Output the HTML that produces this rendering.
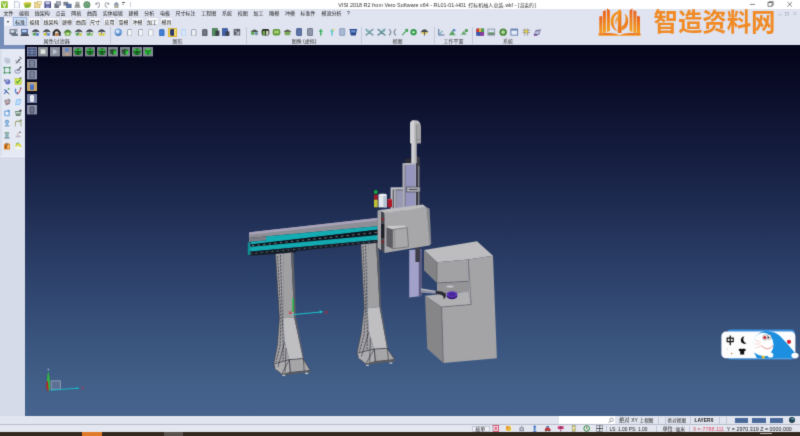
<!DOCTYPE html>
<html>
<head>
<meta charset="utf-8">
<title>VISI 2018 R2</title>
<style>
*{margin:0;padding:0;box-sizing:border-box}
html,body{width:800px;height:436px;overflow:hidden;background:#dde1ee;font-family:"Liberation Sans","Noto Sans CJK SC",sans-serif;}
#app{position:relative;width:800px;height:436px;overflow:hidden;background:#dde1ee}
#soften{position:absolute;left:0;top:0;width:800px;height:436px;filter:url(#softk)}
.abs{position:absolute}
.ic{position:absolute}
#title{left:0;top:0;width:800px;height:9px;background:#fff}
#title .t{position:absolute;left:338.3px;top:1.4px;font-size:5.42px;line-height:7px;color:#333;white-space:nowrap}
#menubar{left:0;top:9px;width:800px;height:8.4px;background:#e0e3f0}
.mi{position:absolute;top:1.4px;font-size:5px;line-height:7px;color:#1c1c1c;white-space:nowrap}
#ribbon{left:0;top:17.4px;width:800px;height:27.6px;background:#e0e3f0}
#ribleft{position:absolute;left:0;top:0;width:3.7px;height:28.1px;background:#748cb8}
.tab{position:absolute;top:0.1px;height:9px;font-size:5px;line-height:8.4px;color:#111;background:#f6f7fb;border:0.5px solid #d9dde9;text-align:center;white-space:nowrap;overflow:hidden}
.tab.act{background:#cddff5;border-color:#98b4dc}
.glabel{position:absolute;top:21px;font-size:5px;line-height:7px;color:#333;white-space:nowrap;transform:translateX(-50%)}
.sep{position:absolute;top:10px;width:0.7px;height:17px;background:#c4cadb}
#viewport{left:25px;top:45px;width:775px;height:370.6px;background:linear-gradient(to bottom,#04041a 0%,#0c102c 15%,#182246 35%,#273961 55%,#364f79 75%,#426089 92%,#45638c 100%);overflow:hidden}
#leftpanel{left:0;top:45.5px;width:25px;height:370px;background:#e3e7f1}
#status1{left:0;top:415.5px;width:800px;height:8.7px;background:#e1e5ef}
#status2{left:0;top:424.2px;width:800px;height:7.8px;background:#e4e7f0;border-top:0.6px solid #b8bdcb}
#taskbar{left:0;top:432px;width:800px;height:4px;background:#33291f}
.st{position:absolute;font-size:5.2px;line-height:7px;color:#222;white-space:nowrap}
</style>
</head>
<body>
<div id="app">
  <svg width="0" height="0" style="position:absolute"><defs><filter id="softk" x="0" y="0" width="100%" height="100%" color-interpolation-filters="sRGB"><feConvolveMatrix order="3" kernelMatrix="1 6 1 6 36 6 1 6 1" divisor="64" edgeMode="duplicate" preserveAlpha="true"/></filter></defs></svg>
<div id="soften">
  <div id="title" class="abs"><svg class="abs" style="left:1.1px;top:0.8px" width="6.8" height="7.6" viewBox="0 0 6.8 7.6"><rect x="0" y="0.2" width="6.8" height="7.2" rx="1" fill="#86bc2c"/><path d="M1.6,1.6 L3.4,6 L5.2,1.6" stroke="#f4fae0" stroke-width="1.1" fill="none"/></svg><svg class="abs" style="left:14px;top:0.8px" width="5.8" height="7.6" viewBox="0 0 5.8 7.6"><path d="M0.4,0.4 L3.8,0.4 L5.4,2 L5.4,7.2 L0.4,7.2 Z" fill="#f8fafd" stroke="#8f9cb8" stroke-width="0.6"/></svg><svg class="abs" style="left:22.5px;top:0.8px" width="9" height="7.6" viewBox="0 0 9 7.6"><path d="M0.4,2.2 L3,1 L8.4,1.6 L8,6 L2,7 Z" fill="#d8c83a"/><path d="M1.4,3.6 L7.6,2.6 L6.4,6.4 L2,7 Z" fill="#8cb838"/></svg><svg class="abs" style="left:33.8px;top:0.8px" width="7.8" height="7.6" viewBox="0 0 7.8 7.6"><rect x="0.6" y="1.6" width="5.4" height="5.4" fill="#ecd694" stroke="#b89a48" stroke-width="0.5"/><rect x="3.4" y="0.6" width="3.8" height="3" fill="#f4e8b8" stroke="#b89a48" stroke-width="0.4"/></svg><svg class="abs" style="left:43.9px;top:0.8px" width="7.4" height="7.6" viewBox="0 0 7.4 7.6"><rect x="0.4" y="0.6" width="6.6" height="6.6" rx="0.6" fill="#4a4f8c"/><rect x="1.6" y="1" width="4.2" height="2.4" fill="#c8cce8"/><rect x="2" y="4.6" width="3.4" height="2.4" fill="#8a8fc0"/></svg><svg class="abs" style="left:53.6px;top:0.8px" width="7.2" height="7.6" viewBox="0 0 7.2 7.6"><rect x="0.4" y="2.4" width="4.6" height="4.6" fill="#6c7280"/><rect x="2.4" y="0.6" width="4.4" height="4" fill="#a4aab8" stroke="#5a606e" stroke-width="0.4"/></svg><svg class="abs" style="left:63px;top:0.8px" width="8.6" height="7.6" viewBox="0 0 8.6 7.6"><rect x="0.4" y="0.8" width="4.8" height="3.8" fill="#7a8290"/><rect x="3.4" y="3" width="4.8" height="4" fill="#5f7aa8" stroke="#3c4c70" stroke-width="0.4"/></svg><svg class="abs" style="left:74.3px;top:0.8px" width="6.8" height="7.6" viewBox="0 0 6.8 7.6"><path d="M1.6,0.8 L5.2,0.8 L5.8,4 L6.6,7 L0.2,7 L1,4 Z" fill="#a8acaa"/><rect x="1.8" y="4" width="3.2" height="1" fill="#7c807e"/></svg><svg class="abs" style="left:83.3px;top:0.8px" width="7.8" height="7.6" viewBox="0 0 7.8 7.6"><circle cx="3.9" cy="3.8" r="3.5" fill="#5a9468"/><circle cx="3.9" cy="3.8" r="2" fill="#8ab894"/><circle cx="3.9" cy="3.8" r="0.9" fill="#3f7a4c"/></svg><svg class="abs" style="left:94.5px;top:0.8px" width="5.6" height="7.6" viewBox="0 0 5.6 7.6"><path d="M1,3 Q3.6,0.4 4.8,3.4 Q5,5.6 2.6,6.6" stroke="#9a9ea6" stroke-width="1.1" fill="none"/><path d="M0.2,1.4 L0.6,4 L3,3.4 Z" fill="#9a9ea6"/></svg><svg class="abs" style="left:104px;top:0.8px" width="5.8" height="7.6" viewBox="0 0 5.8 7.6"><path d="M4.8,3 Q2.2,0.4 1,3.4 Q0.8,5.6 3.2,6.6" stroke="#a4a8b0" stroke-width="1.1" fill="none"/><path d="M5.6,1.4 L5.2,4 L2.8,3.4 Z" fill="#a4a8b0"/></svg><svg class="abs" style="left:112.5px;top:0.8px" width="6.8" height="7.6" viewBox="0 0 6.8 7.6"><path d="M0.4,3.6 L3.4,0.8 L6.4,3.6 L5.4,3.6 L5.4,7 L1.4,7 L1.4,3.6 Z" fill="#8c98b0"/><rect x="2.6" y="4.4" width="1.6" height="2.6" fill="#d8c878"/></svg><div class="abs" style="left:122.4px;top:3.6px;width:0;height:0;border-left:1.1px solid transparent;border-right:1.1px solid transparent;border-top:1.5px solid #555"></div><div class="abs" style="left:122.2px;top:2.2px;width:2.4px;height:0.6px;background:#555"></div><div class="abs" style="left:129.8px;top:1.6px;width:0.6px;height:5.8px;background:#c8ccd6"></div><svg class="abs" role="img" aria-label="VISI 2018 R2 from Vero Software x64 - RL01-01-H01 打标机械人总装.wkf - [渲染的]" style="left:0;top:0;font-family:'Liberation Sans','Noto Sans CJK SC',sans-serif" width="800" height="9" viewBox="0 0 800 9"><text x="338.3" y="6.7" font-size="5.4" textLength="127.8" lengthAdjust="spacingAndGlyphs" fill="#333">VISI 2018 R2 from Vero Software x64 - RL01-01-H01</text><text x="468.2" y="6.6" font-size="5.04" textLength="35.3" lengthAdjust="spacingAndGlyphs" fill="#333">打标机械人总装</text><text x="504" y="6.7" font-size="5.4" textLength="8.9" lengthAdjust="spacingAndGlyphs" fill="#333">.wkf</text><text x="514.4" y="6.7" font-size="5.4" textLength="2" lengthAdjust="spacingAndGlyphs" fill="#333">-</text><text x="517.8" y="6.7" font-size="5.4" textLength="1.4" lengthAdjust="spacingAndGlyphs" fill="#333">[</text><text x="519.5" y="6.6" font-size="4.8" textLength="14.4" lengthAdjust="spacingAndGlyphs" fill="#333">渲染的</text><text x="534.5" y="6.7" font-size="5.4" textLength="1.4" lengthAdjust="spacingAndGlyphs" fill="#333">]</text></svg></div>
  <div id="menubar" class="abs"><div class="mi" style="left:3.4px">文件</div><div class="mi" style="left:19.1px">编辑</div><div class="mi" style="left:34.8px">线架构</div><div class="mi" style="left:55.6px">点云</div><div class="mi" style="left:71.3px">网格</div><div class="mi" style="left:87.0px">曲面</div><div class="mi" style="left:102.7px">实体编辑</div><div class="mi" style="left:128.4px">建模</div><div class="mi" style="left:144.2px">分析</div><div class="mi" style="left:159.9px">电极</div><div class="mi" style="left:175.6px">尺寸标注</div><div class="mi" style="left:201.3px">工程图</div><div class="mi" style="left:222.0px">系统</div><div class="mi" style="left:237.8px">校图</div><div class="mi" style="left:253.5px">加工</div><div class="mi" style="left:269.2px">雕模</div><div class="mi" style="left:284.9px">冲模</div><div class="mi" style="left:300.6px">标准件</div><div class="mi" style="left:321.4px">模流分析</div><div class="mi" style="left:347.1px">?</div></div>
  <div id="ribbon" class="abs"><div id="ribleft"></div><div class="abs" style="left:4.4px;top:0.6px;width:7.6px;height:8px;background:#eef1f8"></div><div class="abs" style="left:7px;top:4px;width:0;height:0;border-left:1.6px solid transparent;border-right:1.6px solid transparent;border-top:2px solid #222"></div><div class="tab act" style="left:13px;width:14px">标准</div><div class="tab" style="left:28.1px;width:13px">编辑</div><div class="tab" style="left:42.3px;width:17.4px">线架构</div><div class="tab" style="left:60.8px;width:12.4px">建模</div><div class="tab" style="left:74.7px;width:12.6px">曲面</div><div class="tab" style="left:88.9px;width:12.4px">尺寸</div><div class="tab" style="left:103px;width:12.9px">应用</div><div class="tab" style="left:117px;width:13px">雪模</div><div class="tab" style="left:131.2px;width:12.8px">冲模</div><div class="tab" style="left:145.6px;width:13px">加工</div><div class="tab" style="left:159.8px;width:13.5px">模具</div><svg class="abs" style="left:9.2px;top:10.54px" width="9.41" height="8.51" viewBox="0 0 8.4 7.6"><rect x="0.6" y="1.2" width="5.6" height="4.4" fill="#5a6474"/><rect x="1.4" y="2" width="3.4" height="2.2" fill="#dfe6ee"/><rect x="2.4" y="5" width="5.6" height="2.2" fill="#6b7686"/><rect x="5.6" y="0.6" width="2" height="3" fill="#9aa6b8"/></svg><svg class="abs" style="left:19.6px;top:10.54px" width="9.41" height="8.51" viewBox="0 0 8.4 7.6"><rect x="1" y="0.8" width="6" height="4" fill="#3f5f9c"/><rect x="1.8" y="1.6" width="4.2" height="2.2" fill="#b8ccec"/><polygon points="0.2,7.2 1.6,4.8 7,4.8 8.2,7.2" fill="#46505e"/></svg><svg class="abs" style="left:30.8px;top:10.64px" width="9.41" height="8.51" viewBox="0 0 8.4 7.6"><path d="M0.4,4 Q4.2,-1.6 8,4 Q6,3 4.2,3.4 Q2.4,3 0.4,4 Z" fill="#3a424c"/><rect x="3.9" y="3" width="0.7" height="3.6" fill="#555"/><circle cx="2.8" cy="5.6" r="1.3" fill="#4fa84f"/><circle cx="5.8" cy="5.8" r="1.3" fill="#4a78c8"/></svg><svg class="abs" style="left:41.6px;top:10.64px" width="9.41" height="8.51" viewBox="0 0 8.4 7.6"><path d="M0.4,4 Q4.2,-1.6 8,4 Q6,3 4.2,3.4 Q2.4,3 0.4,4 Z" fill="#3a424c"/><rect x="3.9" y="3" width="0.7" height="3.6" fill="#555"/><circle cx="2.8" cy="5.6" r="1.3" fill="#c8c040"/><circle cx="5.8" cy="5.8" r="1.3" fill="#5a88d0"/></svg><svg class="abs" style="left:51.9px;top:10.54px" width="9.41" height="8.51" viewBox="0 0 8.4 7.6"><path d="M0.6,7 L0.6,3.8 Q4.2,-2 7.8,3.8 L7.8,7 L5.8,7 L5.8,4 Q4.2,2 2.6,4 L2.6,7 Z" fill="#2f2c2a"/><rect x="3" y="4.6" width="2.4" height="2.4" fill="#c8782a"/></svg><svg class="abs" style="left:62.5px;top:10.54px" width="9.41" height="8.51" viewBox="0 0 8.4 7.6"><path d="M0.4,4.2 Q4.2,-1.6 8,4.2 Z" fill="#4e7a3a"/><rect x="1.6" y="3.4" width="5.2" height="3.6" rx="1" fill="#6fae4a"/><rect x="3" y="4.4" width="2.4" height="1.6" fill="#d8e8a0"/></svg><svg class="abs" style="left:73.9px;top:10.64px" width="9.41" height="8.51" viewBox="0 0 8.4 7.6"><path d="M0.4,4 Q4.2,-1.6 8,4 Q6,3 4.2,3.4 Q2.4,3 0.4,4 Z" fill="#3a424c"/><rect x="3.9" y="3" width="0.7" height="3.6" fill="#555"/><circle cx="2.8" cy="5.6" r="1.3" fill="#4fa84f"/><circle cx="5.8" cy="5.8" r="1.3" fill="#c8c848"/></svg><svg class="abs" style="left:85.3px;top:10.64px" width="9.41" height="8.51" viewBox="0 0 8.4 7.6"><path d="M0.4,4 Q4.2,-1.6 8,4 Q6,3 4.2,3.4 Q2.4,3 0.4,4 Z" fill="#3a424c"/><rect x="3.9" y="3" width="0.7" height="3.6" fill="#555"/><circle cx="2.8" cy="5.6" r="1.3" fill="#58b058"/><circle cx="5.8" cy="5.8" r="1.3" fill="#8ac868"/></svg><svg class="abs" style="left:96.6px;top:10.64px" width="9.41" height="8.51" viewBox="0 0 8.4 7.6"><path d="M0.4,4 Q4.2,-1.6 8,4 Q6,3 4.2,3.4 Q2.4,3 0.4,4 Z" fill="#3a424c"/><rect x="3.9" y="3" width="0.7" height="3.6" fill="#555"/><circle cx="2.8" cy="5.6" r="1.3" fill="#d8d048"/><circle cx="5.8" cy="5.8" r="1.3" fill="#d8d048"/></svg><svg class="abs" style="left:114.24px;top:10.74px" width="8.51" height="8.51" viewBox="0 0 7.6 7.6"><circle cx="3.8" cy="3.8" r="3.3" fill="#6a9ed8"/><circle cx="3.2" cy="3.2" r="1.8" fill="#cfe2f6"/><path d="M1.4,5.8 Q3.8,7.4 6.2,5.8" stroke="#3a68a8" stroke-width="0.8" fill="none"/></svg><svg class="abs" style="left:126.6px;top:11.19px" width="5.6" height="7.62" viewBox="0 0 5 6.8"><rect x="0.5" y="0.5" width="4" height="5.8" rx="0.6" fill="#f4f6fa" stroke="#8a90a0" stroke-width="0.7"/></svg><svg class="abs" style="left:137.6px;top:11.19px" width="5.6" height="7.62" viewBox="0 0 5 6.8"><rect x="0.5" y="0.5" width="4" height="5.8" rx="0.6" fill="#f4f6fa" stroke="#8a90a0" stroke-width="0.7"/></svg><svg class="abs" style="left:148.1px;top:11.19px" width="5.6" height="7.62" viewBox="0 0 5 6.8"><rect x="0.5" y="0.5" width="4" height="5.8" rx="0.6" fill="#f8f9fc" stroke="#a8aebc" stroke-width="0.7"/></svg><svg class="abs" style="left:159.1px;top:11.19px" width="5.6" height="7.62" viewBox="0 0 5 6.8"><rect x="0.5" y="0.5" width="4" height="5.8" rx="0.6" fill="#3f7fd6" stroke="#2f62b0" stroke-width="0.7"/></svg><div class="ic" style="left:167.5px;top:10.400000000000002px;width:9.2px;height:9.4px;background:#f2da68;border:0.5px solid #d8b840"></div><svg class="abs" style="left:169.75px;top:11.53px" width="4.7" height="6.94" viewBox="0 0 4.2 6.2"><rect x="0.5" y="0.5" width="3.2" height="5.2" rx="0.6" fill="#2c3c74" stroke="#1c2850" stroke-width="0.7"/></svg><svg class="abs" style="left:180.5px;top:11.19px" width="5.6" height="7.62" viewBox="0 0 5 6.8"><rect x="0.5" y="0.5" width="4" height="5.8" rx="0.6" fill="#d4e6fa" stroke="#b0c8e8" stroke-width="0.7"/></svg><svg class="abs" style="left:191.3px;top:11.19px" width="5.6" height="7.62" viewBox="0 0 5 6.8"><rect x="0.5" y="0.5" width="4" height="5.8" rx="0.6" fill="#eef0f5" stroke="#8a90a0" stroke-width="0.7"/></svg><svg class="abs" style="left:202.3px;top:11.19px" width="5.6" height="7.62" viewBox="0 0 5 6.8"><rect x="0.5" y="0.5" width="4" height="5.8" rx="0.6" fill="#70757f" stroke="#4a4e58" stroke-width="0.7"/></svg><svg class="abs" style="left:211.68px;top:10.86px" width="7.84" height="8.29" viewBox="0 0 7 7.4"><rect x="0.4" y="0.6" width="4.4" height="6" fill="#4f9060" stroke="#2f5a3a" stroke-width="0.6"/><rect x="3" y="2.4" width="3.6" height="4.6" fill="#3a4048"/></svg><svg class="abs" style="left:222.18px;top:10.86px" width="7.84" height="8.29" viewBox="0 0 7 7.4"><rect x="0.4" y="0.6" width="4.6" height="6" fill="#3f62b0" stroke="#2a3f78" stroke-width="0.6"/><rect x="3.2" y="3" width="3.4" height="4" fill="#39404c"/></svg><svg class="abs" style="left:233.28px;top:10.86px" width="7.84" height="8.29" viewBox="0 0 7 7.4"><rect x="0.6" y="0.8" width="5.8" height="5.8" fill="#5a5f6a"/><path d="M1.6,1.8 L5.2,5.4 M5.2,5.4 L5.2,3 M5.2,5.4 L2.8,5.4" stroke="#e0e4ec" stroke-width="0.8" fill="none"/></svg><svg class="abs" style="left:249.92px;top:10.76px" width="8.96" height="8.29" viewBox="0 0 8 7.4"><path d="M0.4,3.6 Q4,-1 7.6,3.6 Z" fill="#4a5248"/><circle cx="2.4" cy="4.8" r="1.6" fill="#5aa858"/><circle cx="5.6" cy="5" r="1.6" fill="#7a94b0"/></svg><svg class="abs" style="left:260.92px;top:10.76px" width="8.96" height="8.29" viewBox="0 0 8 7.4"><rect x="0.6" y="1" width="6.8" height="5.6" rx="1.4" fill="#2f342c"/><rect x="1.6" y="2.6" width="2" height="3.6" fill="#6fb048"/><rect x="4.6" y="2.6" width="2" height="3.6" fill="#d8dcc8"/></svg><svg class="abs" style="left:272.32px;top:10.76px" width="8.96" height="8.29" viewBox="0 0 8 7.4"><rect x="0.6" y="1" width="6.8" height="5.6" rx="1.6" fill="#5f9a3c"/><rect x="2" y="2.4" width="4" height="2.4" fill="#b0d078"/></svg><svg class="abs" style="left:282.82px;top:10.76px" width="8.96" height="8.29" viewBox="0 0 8 7.4"><path d="M0.4,3.6 Q4,-1 7.6,3.6 Z" fill="#555c50"/><rect x="1.4" y="3.4" width="5.2" height="3" rx="1" fill="#7aa858"/></svg><svg class="abs" style="left:296.06px;top:10.97px" width="6.27" height="8.06" viewBox="0 0 5.6 7.2"><rect x="0.5" y="0.5" width="4.6" height="6.2" rx="0.6" fill="#5d74a8" stroke="#3c5080" stroke-width="0.7"/></svg><svg class="abs" style="left:306.56px;top:10.97px" width="6.27" height="8.06" viewBox="0 0 5.6 7.2"><rect x="0.5" y="0.5" width="4.6" height="6.2" rx="0.6" fill="#9098aa" stroke="#5c6478" stroke-width="0.7"/></svg><svg class="abs" style="left:318.1px;top:10.86px" width="5.6" height="8.29" viewBox="0 0 5 7.4"><path d="M2.6,0.6 L4.4,3.4 L3.2,3.4 L3.2,6.8 L1.8,6.8 L1.8,3.4 L0.6,3.4 Z" fill="#3fb060"/></svg><svg class="abs" style="left:328.88px;top:10.86px" width="6.05" height="8.29" viewBox="0 0 5.4 7.4"><path d="M2.8,0.6 L4.6,3.2 L3.4,3.2 L3.4,6.8 L2,6.8 L2,3.2 L0.8,3.2 Z" fill="#5cc4d4"/><circle cx="4" cy="1.6" r="1" fill="#e8d860"/></svg><svg class="abs" style="left:339.26px;top:10.97px" width="6.27" height="8.06" viewBox="0 0 5.6 7.2"><rect x="0.5" y="0.5" width="4.6" height="6.2" rx="0.6" fill="#a9b9d2" stroke="#8098ba" stroke-width="0.7"/></svg><svg class="abs" style="left:348.64px;top:10.86px" width="8.51" height="8.29" viewBox="0 0 7.6 7.4"><path d="M0.4,1 L7.2,1 L6,6.8 L1.6,6.8 Z" fill="#28488e"/><path d="M1.4,2 L6.2,2 L5.6,4 L2,4 Z" fill="#6f90d0"/></svg><svg class="abs" style="left:365.42px;top:10.76px" width="8.96" height="8.29" viewBox="0 0 8 7.4"><path d="M0.6,1 L4,3.6 L7.4,1 M0.6,6.6 L4,3.8 L7.4,6.6" stroke="#6f98a0" stroke-width="1.2" fill="none"/><circle cx="2" cy="2.4" r="1.3" fill="#8ab8c0"/></svg><svg class="abs" style="left:376.72px;top:10.76px" width="8.96" height="8.29" viewBox="0 0 8 7.4"><path d="M0.6,1 L4,3.6 L7.4,1 M0.6,6.6 L4,3.8 L7.4,6.6" stroke="#5f8a94" stroke-width="1.2" fill="none"/><circle cx="5.8" cy="2.4" r="1.3" fill="#7fb0b8"/></svg><svg class="abs" style="left:388.12px;top:10.76px" width="8.96" height="8.29" viewBox="0 0 8 7.4"><path d="M1,1 Q4,3.8 1,6.6 M7,1 Q4,3.8 7,6.6" stroke="#7a8898" stroke-width="1.1" fill="none"/></svg><svg class="abs" style="left:400.68px;top:10.76px" width="7.84" height="8.29" viewBox="0 0 7 7.4"><path d="M1,6.4 L6,1.2 M6,1.2 L3.6,1.6 M6,1.2 L5.6,3.6" stroke="#3fa04f" stroke-width="1" fill="none"/></svg><svg class="abs" style="left:410.12px;top:10.76px" width="7.17" height="8.29" viewBox="0 0 6.4 7.4"><circle cx="3.2" cy="3.7" r="2.8" fill="#2f9a48"/><circle cx="3.2" cy="3.7" r="1.1" fill="#c8ecc8"/></svg><svg class="abs" style="left:419.62px;top:10.76px" width="8.96" height="8.29" viewBox="0 0 8 7.4"><path d="M0.4,3.8 Q4,-1.4 7.6,3.8 Z" fill="#444a50"/><rect x="1.6" y="3.8" width="4.8" height="1.6" fill="#e0c848"/><rect x="3.6" y="3.6" width="0.8" height="3.2" fill="#555"/></svg><svg class="abs" style="left:437.26px;top:10.76px" width="8.29" height="8.29" viewBox="0 0 7.4 7.4"><path d="M1.6,0.8 L1.6,6.2 L6.6,6.2" stroke="#4f6a98" stroke-width="0.9" fill="none"/><path d="M1.6,6.2 L5,2.6" stroke="#6fa8b8" stroke-width="0.9"/></svg><svg class="abs" style="left:448.44px;top:10.76px" width="8.51" height="8.29" viewBox="0 0 7.6 7.4"><path d="M0.8,6.4 L3.8,2 L6.8,6.4 Z" fill="#5fa468"/><circle cx="5.4" cy="2" r="1.2" fill="#4f80c0"/></svg><svg class="abs" style="left:459.84px;top:10.76px" width="8.51" height="8.29" viewBox="0 0 7.6 7.4"><path d="M0.8,6 L3.4,2.4 L6,6 Z" fill="#68a870"/><rect x="4.4" y="1" width="2.6" height="2.6" fill="#5a9a60"/></svg><svg class="abs" style="left:476.14px;top:10.76px" width="8.51" height="8.29" viewBox="0 0 7.6 7.4"><rect x="0.4" y="0.6" width="6.8" height="6.2" fill="#4a3a78"/><rect x="0.4" y="0.6" width="2.3" height="3" fill="#d03434"/><rect x="2.7" y="0.6" width="2.3" height="3" fill="#e0c030"/><rect x="5" y="0.6" width="2.2" height="3" fill="#38a048"/><rect x="0.4" y="3.6" width="3.4" height="3.2" fill="#3858b0"/><rect x="3.8" y="3.6" width="3.4" height="3.2" fill="#8a3aa0"/></svg><svg class="abs" style="left:487.44px;top:10.76px" width="8.51" height="8.29" viewBox="0 0 7.6 7.4"><rect x="0.4" y="0.6" width="6.8" height="6.2" fill="#8a94a8"/><rect x="1.2" y="1.4" width="5.2" height="3.6" fill="#d8e4f0"/><rect x="1.2" y="4" width="5.2" height="1.6" fill="#5a8a58"/></svg><svg class="abs" style="left:498.96px;top:10.76px" width="8.29" height="8.29" viewBox="0 0 7.4 7.4"><circle cx="3.7" cy="3.7" r="3.3" fill="#4a8a3c"/><circle cx="3.7" cy="3.7" r="1.6" fill="#b8d8a0"/></svg><svg class="abs" style="left:510.24px;top:10.76px" width="8.51" height="8.29" viewBox="0 0 7.6 7.4"><rect x="0.4" y="0.6" width="6.8" height="6.2" fill="#5f7ab0"/><rect x="1.2" y="2.2" width="5.2" height="3.8" fill="#e4ecf6"/></svg><svg class="abs" style="left:521.64px;top:10.76px" width="8.51" height="8.29" viewBox="0 0 7.6 7.4"><path d="M0.6,2 H7 M0.6,4 H7 M2.6,0.6 V6.8 M5,0.6 V6.8" stroke="#8a8e78" stroke-width="0.8"/><circle cx="3.8" cy="3" r="1.5" fill="#e0c848"/></svg><svg class="abs" style="left:532.94px;top:10.76px" width="8.51" height="8.29" viewBox="0 0 7.6 7.4"><path d="M0.6,6.6 L2.4,1.8 L7.2,1 L5.6,6 Z" fill="#7a80a8"/><path d="M2.4,3.4 L6,2.6 L5.2,5 L2,5.6 Z" fill="#c0c4dc"/><rect x="0.8" y="5.6" width="3" height="1.2" fill="#6a3a90"/></svg><div class="glabel" style="left:56.6px">属性/过滤器</div><div class="glabel" style="left:177.6px">图形</div><div class="glabel" style="left:304px">图像 (虚拟)</div><div class="glabel" style="left:397.5px">视图</div><div class="glabel" style="left:453.4px">工作平面</div><div class="glabel" style="left:508px">系统</div><div class="sep" style="left:110px"></div><div class="sep" style="left:246px"></div><div class="sep" style="left:360.6px"></div><div class="sep" style="left:433.8px"></div><div class="sep" style="left:472.2px"></div></div>
  <svg class="abs" style="left:0;top:0" width="800" height="46" viewBox="0 0 800 46">
<defs><linearGradient id="og" x1="0" y1="0" x2="0" y2="1"><stop offset="0" stop-color="#ea5f1e"/><stop offset="1" stop-color="#f6a21c"/></linearGradient>
<linearGradient id="og2" x1="0" y1="0" x2="1" y2="1"><stop offset="0" stop-color="#f7a820"/><stop offset="1" stop-color="#e8641c"/></linearGradient></defs>
<g fill="url(#og)">
<polygon points="599.3,16.4 602.3,16 602.3,33.6 599.3,34"/>
<polygon points="602.9,11.2 605.9,10.2 605.9,32.6 602.9,33.2"/>
<polygon points="606.9,8.2 609.9,10.4 609.9,31 606.9,32"/>
<polygon points="629.6,10.4 632.4,8.2 632.4,32 629.6,31"/>
<polygon points="633.4,10.2 636.4,11.2 636.4,33.2 633.4,32.6"/>
<polygon points="637,16 640,16.4 640,34 637,33.6"/>
<path d="M598.6,33.6 Q609,32.4 615.5,33.8 Q618,34.4 619.6,35.2 Q621,34.4 623.6,33.8 Q630,32.4 640.6,33.6 L640.6,35.8 L598.6,35.8 Z"/>
</g>
<g fill="url(#og2)">
<path d="M619.4,9.4 Q621.6,9.8 621.4,13 L621.4,33 L617.8,33 L617.8,14 Q615,12.6 619.4,9.4 Z"/>
<path d="M617.8,11.6 Q610.4,14 610.6,21.6 Q610.8,28.6 617.8,31.6 Q613.2,27.4 613.6,21.2 Q614,15.6 617.8,13.6 Z"/>
<path d="M621.4,30.8 Q628.4,28 628.2,20.8 Q628,16 624.6,13.6 Q626.4,17.6 625.4,21.4 Q624.4,25 621.4,26.6 Z"/>
<path d="M617.8,16 Q613.6,20 616,25 Q616.6,21 617.8,19.6 Z" opacity=".8"/>
</g>
<text x="653.5" y="31.4" font-size="25" font-weight="bold" fill="#f08a24" textLength="122" lengthAdjust="spacingAndGlyphs" style="font-family:'Liberation Sans','Noto Sans CJK SC',sans-serif">智造资料网</text>
<g stroke="#333" stroke-width="0.6" fill="none">
<line x1="750" y1="4.4" x2="755" y2="4.4"/>
<rect x="768" y="2.6" width="4" height="3.6"/><polyline points="769.2,2.6 769.2,1.6 773.2,1.6 773.2,5.2 772,5.2"/>
<path d="M787.4,2 l4.6,4.6 m0,-4.6 l-4.6,4.6"/>
</g>
<g stroke="#9aa0b0" stroke-width="0.5" fill="none">
<line x1="778.2" y1="15" x2="781.4" y2="15"/>
<rect x="785.6" y="12.4" width="3" height="2.8"/>
<path d="M793.4,12.2 l3,3 m0,-3 l-3,3"/>
</g>
</svg>
  <div id="viewport" class="abs"><svg class="abs" style="left:1.6px;top:2.2px" width="10" height="9.4" viewBox="0 0 10 9.4"><rect width="10" height="9.4" fill="#7f88a4"/><rect x="1" y="1" width="8" height="7.4" fill="#46557e"/><path d="M1,3.4 H9 M1,5.8 H9 M5,1 V8.4" stroke="#93a0c0" stroke-width="0.6"/></svg><svg class="abs" style="left:13.28px;top:2.2px" width="10" height="9.4" viewBox="0 0 10 9.4"><rect width="10" height="9.4" fill="#8a9098"/><rect x="2.6" y="2.4" width="4.8" height="4.4" fill="#dfe6dd"/></svg><svg class="abs" style="left:24.96px;top:2.2px" width="10" height="9.4" viewBox="0 0 10 9.4"><rect width="10" height="9.4" fill="#8a8f9c"/><polygon points="3,2 7.6,4.8 3,7.4" fill="#bcc6d2"/></svg><svg class="abs" style="left:36.64px;top:2.2px" width="10" height="9.4" viewBox="0 0 10 9.4"><rect width="10" height="9.4" fill="#9a9498"/><rect x="3" y="1" width="3.6" height="3.6" fill="#5b86c8"/><polygon points="2,8.4 5,4.4 8,8.4" fill="#b8a090"/></svg><svg class="abs" style="left:48.32px;top:2.2px" width="10" height="9.4" viewBox="0 0 10 9.4"><rect width="10" height="9.4" fill="#838a92"/><ellipse cx="5" cy="4.7" rx="3.6" ry="3.4" fill="#1f7d2c"/><ellipse cx="5" cy="3.4" rx="3" ry="1.5" fill="#35c545"/><path d="M1.6,4.6 L8.4,4.6 M5,1.6 L5,8" stroke="#0e2a12" stroke-width="0.7"/></svg><svg class="abs" style="left:60.0px;top:2.2px" width="10" height="9.4" viewBox="0 0 10 9.4"><rect width="10" height="9.4" fill="#838a92"/><ellipse cx="5" cy="4.7" rx="3.6" ry="3.4" fill="#1f7d2c"/><ellipse cx="5" cy="3.4" rx="3" ry="1.5" fill="#35c545"/><path d="M1.6,4.6 L8.4,4.6 M5,1.6 L5,8" stroke="#0e2a12" stroke-width="0.7"/></svg><svg class="abs" style="left:71.68px;top:2.2px" width="10" height="9.4" viewBox="0 0 10 9.4"><rect width="10" height="9.4" fill="#838a92"/><ellipse cx="5" cy="4.7" rx="3.6" ry="3.4" fill="#1f7d2c"/><ellipse cx="5" cy="3.4" rx="3" ry="1.5" fill="#35c545"/><path d="M1.6,4.6 L8.4,4.6 M5,1.6 L5,8" stroke="#0e2a12" stroke-width="0.7"/></svg><svg class="abs" style="left:83.36px;top:2.2px" width="10" height="9.4" viewBox="0 0 10 9.4"><rect width="10" height="9.4" fill="#838a92"/><polygon points="5,1.6 8.2,3 8.2,6.4 5,8 1.8,6.4 1.8,3" fill="#3b5a44"/><polygon points="5,3.2 8.2,3 8.2,6.4 5,8" fill="#2fcf3e"/><path d="M1.8,3 L5,4.4 L8.2,3 M5,4.4 L5,8" stroke="#102c14" stroke-width="0.7" fill="none"/></svg><svg class="abs" style="left:95.04px;top:2.2px" width="10" height="9.4" viewBox="0 0 10 9.4"><rect width="10" height="9.4" fill="#838a92"/><polygon points="5,1.6 8.2,3 8.2,6.4 5,8 1.8,6.4 1.8,3" fill="#3b5a44"/><polygon points="5,3.2 8.2,3 8.2,6.4 5,8" fill="#2fcf3e"/><path d="M1.8,3 L5,4.4 L8.2,3 M5,4.4 L5,8" stroke="#102c14" stroke-width="0.7" fill="none"/></svg><svg class="abs" style="left:106.72px;top:2.2px" width="10" height="9.4" viewBox="0 0 10 9.4"><rect width="10" height="9.4" fill="#838a92"/><ellipse cx="5" cy="4.7" rx="3.6" ry="3.4" fill="#1f7d2c"/><ellipse cx="5" cy="3.4" rx="3" ry="1.5" fill="#35c545"/><path d="M1.6,4.6 L8.4,4.6 M5,1.6 L5,8" stroke="#0e2a12" stroke-width="0.7"/></svg><svg class="abs" style="left:118.4px;top:2.2px" width="10" height="9.4" viewBox="0 0 10 9.4"><rect width="10" height="9.4" fill="#838a92"/><polygon points="5,1.4 8.2,2.8 8.2,6.4 5,8 1.8,6.4 1.8,2.8" fill="#25b634"/><polygon points="5,1.4 8.2,2.8 5,4.2 1.8,2.8" fill="#4fd455"/><path d="M1.8,2.8 L5,4.2 L8.2,2.8 M5,4.2 L5,8" stroke="#123818" stroke-width="0.7" fill="none"/></svg><svg class="abs" style="left:1.6px;top:13.9px" width="10" height="9.4" viewBox="0 0 10 9.4"><rect width="10" height="9.4" fill="#8c93a8"/><rect x="2.4" y="1.4" width="5.2" height="6.6" fill="none" stroke="#4a5470" stroke-width="0.8"/><path d="M2.4,3.6 H7.6 M2.4,5.8 H7.6" stroke="#4a5470" stroke-width="0.6"/></svg><svg class="abs" style="left:1.6px;top:25.4px" width="10" height="9.4" viewBox="0 0 10 9.4"><rect width="10" height="9.4" fill="#8c93a8"/><rect x="2.8" y="1.8" width="4.4" height="6" fill="#7a8198" stroke="#4d566f" stroke-width="0.7"/></svg><svg class="abs" style="left:1.6px;top:37.1px" width="10" height="9.4" viewBox="0 0 10 9.4"><rect width="10" height="9.4" fill="#c4a55e"/><rect x="3" y="1.6" width="4" height="6.4" rx="1" fill="#4f6fc4"/><ellipse cx="5" cy="2" rx="2" ry="0.8" fill="#9fb6e8"/></svg><svg class="abs" style="left:1.6px;top:48.8px" width="10" height="9.4" viewBox="0 0 10 9.4"><rect width="10" height="9.4" fill="#7781a4"/><rect x="3" y="1.6" width="4" height="6.4" rx="1" fill="#e6e9f0"/><ellipse cx="5" cy="2" rx="2" ry="0.8" fill="#fff"/></svg><svg class="abs" style="left:1.6px;top:60.4px" width="10" height="9.4" viewBox="0 0 10 9.4"><rect width="10" height="9.4" fill="#8a90a4"/><rect x="3" y="2" width="4" height="6" rx="0.8" fill="#6d748a" stroke="#3a4158" stroke-width="0.7"/></svg></div>
  <svg id="model" class="abs" style="left:0;top:0" width="800" height="436" viewBox="0 0 800 436">
    <defs>
      <clipPath id="vp"><rect x="25" y="45" width="775" height="370.6"/></clipPath>
    </defs>
    <g clip-path="url(#vp)" stroke-linejoin="round"><g>
      <!-- ===== beam ===== -->
      <!-- gray top rail -->
      <polygon points="249,232.4 379,217.7 379,226.1 249,238" fill="#8e8e96"/>
      <polygon points="249,232.4 379,217.7 379,220.2 249,234.8" fill="#a9a3ba"/>
      <!-- left end block under rail -->
      <polygon points="249,238 266,236.4 266,240.4 249,242" fill="#7c7c84"/>
      <!-- cyan upper -->
      <polygon points="251,241.8 266,240.4 266,236.4 379,226.1 379,229.5 251,244.6" fill="#13acb2"/>
      <!-- chain black -->
      <polygon points="251,244.4 379,229.5 379,235 251,247.2" fill="#0d141c"/>
      <!-- cyan lower -->
      <polygon points="249,246.9 379,235 379,239.8 249,251.7" fill="#12a9af"/>
      <polygon points="249,251.7 379,239.8 379,242.6 296,251.2 296,252.4 249,255.8" fill="#161e28"/>
      <!-- dashes on chain + bottom -->
      <line x1="252" y1="245.7" x2="379" y2="232.2" stroke="#74848c" stroke-width="1" stroke-dasharray="2.2 3.4"/>
      <line x1="250" y1="253.7" x2="379" y2="241.2" stroke="#6c7880" stroke-width="0.8" stroke-dasharray="1.8 3.6"/>
      <!-- beam end cap -->
      <polygon points="247.8,242.4 250.2,242 250.2,255.6 247.8,254.4" fill="#0f8f94"/>

      <!-- ===== left leg ===== -->
      <polygon points="275.5,254 283.1,253.4 283.2,318.3 284.7,342 289.3,359.6 273.7,364.1 277.4,345 279.4,318" fill="#a2a2a6"/>
      <path d="M277.6,256 L281,318 L280,346 L276,362 M280.4,255 L282.4,318 L283.2,344 L283,361" stroke="#34343a" stroke-width="0.75" fill="none" stroke-dasharray="2.4 1"/>
      <polygon points="283.1,253.4 291.1,252.6 294.2,317.4 283.2,318.3" fill="#a0a0a2"/>
      <polygon points="283.2,318.3 294.2,317.4 303,358.6 289.3,359.6 284.7,342" fill="#bfbfc1"/>
      <polygon points="291.1,252.6 293.5,252.4 296,317 304,358.4 303,358.6 294.2,317.4" fill="#5f5f65"/>
      <polygon points="289.3,359.6 303,358.6 310.4,370.5 290.2,372.4" fill="#a6a6a8" stroke="#2e2e34" stroke-width="0.6"/><path d="M303.4,358.8 L304.2,371" stroke="#2e2e34" stroke-width="0.6"/>
      <polygon points="273.7,364.1 289.3,359.6 290.2,372.4 282,374.6 275.3,369" fill="#adadb0" stroke="#2e2e34" stroke-width="0.6"/><path d="M284.6,342 L278,367 M289.3,359.6 L282,373.6 M286,348 L285,372.6" stroke="#2e2e34" stroke-width="0.6" fill="none"/>
      <polygon points="282,373.6 290.2,372.4 310.4,370.5 310.8,372 290.4,374.3 282.2,375.2" fill="#5c5c60"/>
      <ellipse cx="283.8" cy="375.3" rx="1.8" ry="0.8" fill="#c4c4c8"/><ellipse cx="306.7" cy="373.4" rx="1.8" ry="0.8" fill="#c4c4c8"/><ellipse cx="276.4" cy="368.8" rx="1.4" ry="0.7" fill="#b4b4b8"/>

      <path d="M275.5,254 L279.4,318 L277.4,345 L273.7,364.1" stroke="#3a3a40" stroke-width="0.6" fill="none"/>
      <!-- ===== right leg ===== -->
      <polygon points="360.9,244.4 368.1,243.8 367.6,308.3 368.8,332.1 374.3,349 356.9,353.2 361,334 364.2,308" fill="#a2a2a6"/>
      <path d="M363,246 L365.6,308 L364,335 L359.4,351.6 M365.6,245 L366.8,308 L367.4,333 L367,350.4" stroke="#34343a" stroke-width="0.75" fill="none" stroke-dasharray="2.4 1"/>
      <polygon points="368.1,243.8 376.1,243 379.6,306.9 367.6,308.3" fill="#a0a0a2"/>
      <polygon points="367.6,308.3 379.6,306.9 387.1,348.3 374.3,349 368.8,332.1" fill="#bfbfc1"/>
      <polygon points="376.1,243 378.5,242.8 381,306.6 388.1,348.1 387.1,348.3 379.6,306.9" fill="#5f5f65"/>
      <polygon points="374.3,349 387.1,348.3 394.8,359.6 375.2,361.5" fill="#a6a6a8" stroke="#2e2e34" stroke-width="0.6"/><path d="M387.4,348.4 L388.4,360.2" stroke="#2e2e34" stroke-width="0.6"/>
      <polygon points="356.9,353.2 374.3,349 375.2,361.5 366.1,364.3 358.8,358.4" fill="#adadb0" stroke="#2e2e34" stroke-width="0.6"/><path d="M368.8,332 L361.4,356.6 M374.3,349 L366.1,363.3 M370.4,338 L369.6,362" stroke="#2e2e34" stroke-width="0.6" fill="none"/>
      <polygon points="366.1,363.3 375.2,361.5 394.8,359.6 395.2,361.2 375.4,363.4 366.3,365" fill="#5c5c60"/>
      <ellipse cx="367.4" cy="365.2" rx="1.8" ry="0.8" fill="#c4c4c8"/><ellipse cx="390.8" cy="363" rx="1.8" ry="0.8" fill="#c4c4c8"/><ellipse cx="359.8" cy="357.8" rx="1.4" ry="0.7" fill="#b4b4b8"/>

      <path d="M360.9,244.4 L364.2,308 L361,334 L356.9,353.2" stroke="#3a3a40" stroke-width="0.6" fill="none"/>
      <!-- ===== vertical arm (lavender) behind machine ===== -->
      <polygon points="409.2,250 421.6,249 421.6,296 409.2,297.5" fill="#a2a1ca"/>
      <polygon points="418.8,249.2 422,249 422,296 418.8,296.3" fill="#5c5b80"/>

      <!-- ===== machine (C-frame) ===== -->
      <!-- top face -->
      <polygon points="424,250 477,241.2 493,255.7 468.3,259.5 437,262.2" fill="#bdbdbf"/>
      <!-- head left face -->
      <polygon points="424,250 437,262.2 437,283 424,270.3" fill="#838386"/>
      <!-- head front face -->
      <polygon points="437,262.2 468.3,259.5 468.3,281.3 437,283" fill="#a2a2a4"/>
      <!-- throat back wall -->
      <polygon points="437,283 468.3,281.3 468.3,292 459.4,292.6 437,294.6" fill="#949497"/>
      <polygon points="468.3,259.5 471.2,262 471.2,304.4 468.3,291.6" fill="#adadaf"/>
      <!-- table top -->
      <polygon points="425,295.8 459.4,292.6 468.3,291.6 471.2,304.4 441.7,307" fill="#b1b1b3"/>
      <!-- lower left face -->
      <polygon points="425,295.8 441.7,307 443.3,363.1 427.3,348.7" fill="#868689"/>
      <!-- front face (lower + right column) -->
      <polygon points="468.3,259.5 493,255.7 496.9,358.3 443.3,363.1 441.7,307 471.2,304.4" fill="#a4a4a6"/>
      <!-- edges -->
      <g fill="none" stroke="#55555a" stroke-width="0.5">
        <polyline points="437,262.2 437,283 468.3,281.3"/>
        <polyline points="441.7,307 471.2,304.4 468.3,259.5"/>
        <polyline points="441.7,307 443.3,363.1"/>
      </g>

      <!-- horizontal arm + purple disc -->
      <polygon points="421,288.4 439,291.4 439,294 421,292.4" fill="#9292a4"/>
      <polygon points="421,288.4 439,291.4 439,292.2 421,289.6" fill="#c4c4d0"/>
      <path d="M435.6,291.2 Q441,290.6 445.4,293.2 Q447,297 443.6,299.2 Q444,295.8 441,294.8 Q438,294 435.6,293.8 Z" fill="#2a2a32"/>
      <ellipse cx="450" cy="286.6" rx="3.6" ry="1" fill="#c8c8cc"/>
      <ellipse cx="452" cy="296" rx="5.4" ry="3.2" fill="#351a7c"/>
      <ellipse cx="452" cy="294.2" rx="5.4" ry="3" fill="#5f38b8"/>
      <ellipse cx="452" cy="294.2" rx="3.4" ry="1.7" fill="#44259a"/>

      <!-- ===== column (vertical axis) ===== -->
      <polygon points="415.4,156 419.8,157 419.8,262 415.4,262" fill="#3c3c48"/>
      <rect x="418.3" y="166" width="1" height="40" fill="#9c9ca4"/>
      <polygon points="402.3,163.2 416,162.4 416,210 402.3,210" fill="#b2b2bc"/>
      <polygon points="405,165.2 415.4,164.6 415.4,210 405,210" fill="#9595bd"/>
      <path d="M402.4,163.4 L402.4,210 M405,165.2 L405,210" stroke="#3c3c48" stroke-width="0.45"/>
      <rect x="405.2" y="158.6" width="5.8" height="4.4" fill="#2a2a33"/>
      <rect x="406.5" y="187" width="13.7" height="5" fill="#a9a9b2" stroke="#2c2c34" stroke-width="0.5"/>
      <path d="M409,189.5 L417.6,189.5" stroke="#3a3a44" stroke-width="0.8"/>
      <!-- hook -->
      <path d="M410.1,163 L410.1,124.5 Q410.1,120.2 414,120.2 L416,120.2 Q420.8,120.6 420.8,127 L420.8,143.2 L416.7,143.2 L416.7,163 L411.5,163 L411.5,143.2 L410.1,143.2 Z" fill="#bcbcbe"/>
      <path d="M410.1,143.2 L410.1,124.5 Q410.1,120.2 414,120.2 L414,163 L411.5,163 L411.5,143.2 Z" fill="#d2d2d4"/>
      <path d="M416.4,123.4 Q420.8,123.4 420.8,127.6 L420.8,143.2 L416.4,143.2 Z" fill="#a2a2a5"/>
      <path d="M416.3,124.4 L416.3,143.2" stroke="#6a6a70" stroke-width="0.5"/>
      <path d="M416.4,139.6 L420.8,139.6" stroke="#77777c" stroke-width="0.5"/>

      <!-- bracket -->
      <rect x="390.6" y="187.3" width="12.4" height="22" fill="#c2c2c7"/>
      <rect x="392.6" y="189.4" width="10.4" height="20" fill="#5f5f6a"/>
      <rect x="394.2" y="189.4" width="1.4" height="20" fill="#c9c9ce"/>
      <rect x="396.2" y="190.4" width="6.8" height="19" fill="#9999b4"/>

      <!-- ===== carriage ===== -->
      <polygon points="377.6,210.3 423,204.5 425.7,206.9 384.4,213.1" fill="#bdbdc0"/>
      <polygon points="377.6,210.3 384.4,213.1 384.4,253 377.6,247.4" fill="#45454c"/>
      <polygon points="377.6,210.3 381,211.7 381,250.2 377.6,247.4" fill="#a6a6aa"/>
      <polygon points="384.4,213.1 425.7,206.9 429.1,245.4 384.4,253" fill="#a7a7a9"/>
      <polygon points="425.7,206.9 429.6,208.4 431.2,244 429.1,245.4" fill="#8a8a8e"/>
      <path d="M384.4,213.1 L425.7,206.9 L429.1,245.4" stroke="#d0d0d3" stroke-width="0.5" fill="none"/>
      <!-- inner box -->
      <polygon points="386.5,227.5 392.7,229.6 407.1,227.5 405,225.4 388.6,226.1" fill="#c9c9cb"/>
      <polygon points="386.5,227.5 392.7,229.6 392.7,248.8 386.5,246" fill="#55555b"/>
      <path d="M388,229 L388,246.4 M389.6,229.4 L389.6,247.2 M391.2,229.8 L391.2,248" stroke="#8c8c92" stroke-width="0.4" stroke-dasharray="1.4 1"/>
      <polygon points="392.7,229.6 407.1,227.5 408.5,246.8 392.7,248.8" fill="#a9a9ab" stroke="#4c4c52" stroke-width="0.5"/>
      <line x1="394.6" y1="229.4" x2="394.8" y2="248.4" stroke="#77777c" stroke-width="0.5"/>
      <!-- left-face details -->
      <rect x="381.2" y="218" width="3" height="2.4" fill="#7a2a30"/>
      <rect x="381.2" y="224" width="3" height="14" fill="#1c1c24"/>
      <rect x="381.2" y="240.6" width="3" height="2.4" fill="#7a2a30"/>

      <!-- signal tower + cylinders -->
      <rect x="374" y="194.8" width="3.7" height="5" fill="#a01c24"/>
      <rect x="374" y="199.7" width="3.7" height="7.6" fill="#bfbf34"/>
      <circle cx="375.8" cy="192" r="1.9" fill="#16a63e"/>
      <rect x="378.5" y="195" width="8.3" height="12.4" fill="#e4e8ee"/>
      <rect x="383.4" y="195" width="3.4" height="12.4" fill="#b4c2d2"/>
      <ellipse cx="382.65" cy="195" rx="4.15" ry="1.3" fill="#f2f4f8" stroke="#a8b0bc" stroke-width="0.3"/>
      <rect x="387.6" y="199.6" width="4.4" height="7.6" fill="#b01828"/>
      <ellipse cx="389.8" cy="199.6" rx="2.2" ry="0.8" fill="#cc3444"/>

      <!-- ===== origin triad ===== -->
      <line x1="293" y1="314.6" x2="321" y2="312" stroke="#19c4cc" stroke-width="1"/>
      <polygon points="319.6,310.6 323.4,311.8 319.8,313.4" fill="#19c4cc"/>
      <line x1="293" y1="312" x2="293.2" y2="298" stroke="#18b83a" stroke-width="1.4"/>
      <path d="M289,311.4 l2.6,2.6 m0,-2.6 l-2.6,2.6" stroke="#d02030" stroke-width="0.9" fill="none"/>
      <path d="M324.8,310.8 l2.8,3 m0,-3 l-2.8,3" stroke="#c02434" stroke-width="0.8" fill="none"/>

      <!-- ===== corner triad ===== -->
      <rect x="51.2" y="380.8" width="9.2" height="8.6" fill="#8c93a8" fill-opacity="0.35" stroke="#b8bccb" stroke-width="0.6"/>
      <line x1="50" y1="390.2" x2="78" y2="388.2" stroke="#17bcc8" stroke-width="0.9"/>
      <polygon points="76.4,387.2 79.6,388.1 76.4,389.4" fill="#17bcc8"/>
      <path d="M48.3,390.5 Q45.5,382 48.3,371 Q50.8,382 49.6,390.5 Z" fill="#2fba3a"/>
      <path d="M47,390.8 Q45.3,386 46.6,381 L48,381 L48.6,390.8 Z" fill="#b02a2a"/>
      <circle cx="82.5" cy="388" r="1.6" fill="#8b4a66" opacity="0.7"/>
      <circle cx="48.4" cy="369.4" r="1" fill="#9fb2c8" opacity="0.8"/>
    </g></g>
  </svg>

  <div id="leftpanel" class="abs"><div class="abs" style="left:0;top:-0.6px;width:25px;height:3.6px;background:#768eb9"></div><div class="abs" style="left:0;top:3px;width:25px;height:107.2px;background:#e5e9f4"></div><div class="abs" style="left:0;top:110.2px;width:25px;height:261px;background:#d6dbea;border-top:0.6px solid #eceff7"></div><div class="abs" style="left:0;top:3px;width:2px;height:107px;background:#d9dfec"></div><svg class="abs" style="left:3.3px;top:10.1px" width="8.4" height="8.4" viewBox="0 0 8.4 8.4"><rect x="1" y="1.4" width="4.6" height="4.6" fill="#ccd3e0"/><rect x="2.6" y="2.8" width="4.6" height="4.6" fill="#bcc5d6"/></svg><svg class="abs" style="left:14.0px;top:10.1px" width="8.4" height="8.4" viewBox="0 0 8.4 8.4"><path d="M1.4,7.2 L5.4,2.4 L6.6,3.4 L2.6,7.4 Z" fill="#5a5e68"/><path d="M5.6,0.8 L7.6,2.8" stroke="#333" stroke-width="1"/><path d="M1.2,4.4 L6.8,7.2" stroke="#8a8e98" stroke-width="0.7"/></svg><svg class="abs" style="left:3.3px;top:20.4px" width="8.4" height="8.4" viewBox="0 0 8.4 8.4"><rect x="1.4" y="1.6" width="5.4" height="5.2" fill="none" stroke="#4f9e6c" stroke-width="0.9"/><rect x="0.6" y="0.8" width="1.6" height="1.6" fill="#3f8a58"/><rect x="6" y="0.8" width="1.6" height="1.6" fill="#3f8a58"/><rect x="0.6" y="6" width="1.6" height="1.6" fill="#3f8a58"/><rect x="6" y="6" width="1.6" height="1.6" fill="#3f8a58"/></svg><svg class="abs" style="left:14.0px;top:20.4px" width="8.4" height="8.4" viewBox="0 0 8.4 8.4"><ellipse cx="3.6" cy="5.4" rx="2.8" ry="1.8" fill="none" stroke="#7a86a8" stroke-width="0.9"/><path d="M3.4,5 L6.6,1.4" stroke="#555a68" stroke-width="1.1"/><rect x="5.8" y="0.6" width="1.6" height="1.2" fill="#333"/></svg><svg class="abs" style="left:3.3px;top:31.4px" width="8.4" height="8.4" viewBox="0 0 8.4 8.4"><path d="M1,1.4 L3.4,3.6 L1.4,5 Z" fill="#7a8090"/><circle cx="4.8" cy="4.8" r="2.6" fill="#6a76c4"/><circle cx="4.2" cy="4" r="1" fill="#aab4e8"/></svg><svg class="abs" style="left:14.0px;top:31.4px" width="8.4" height="8.4" viewBox="0 0 8.4 8.4"><rect x="1" y="1.4" width="6.2" height="6" fill="#d4e650" stroke="#a8b838" stroke-width="0.5"/><path d="M2.2,4.4 L3.6,6 L6.2,2.6" stroke="#3f9f3f" stroke-width="1.1" fill="none"/><rect x="5.6" y="0.6" width="1.8" height="0.9" fill="#333"/></svg><svg class="abs" style="left:3.3px;top:41.1px" width="8.4" height="8.4" viewBox="0 0 8.4 8.4"><path d="M1,7 L4,3.4 M1.4,2.4 L4.6,5.8" stroke="#4a6fc0" stroke-width="1.1"/><circle cx="5.6" cy="1.8" r="0.9" fill="#3a9a4a"/><path d="M4,5 L6.4,7.4" stroke="#444" stroke-width="0.9"/></svg><svg class="abs" style="left:14.0px;top:41.1px" width="8.4" height="8.4" viewBox="0 0 8.4 8.4"><path d="M1.6,1.6 Q0.8,6.8 4,7" stroke="#4f7fd0" stroke-width="1.3" fill="none"/><path d="M3,5 L4.4,6.6 L7,1.6" stroke="#c04848" stroke-width="1" fill="none"/><rect x="5.8" y="0.6" width="1.6" height="0.9" fill="#333"/></svg><svg class="abs" style="left:3.3px;top:52.5px" width="8.4" height="8.4" viewBox="0 0 8.4 8.4"><path d="M1.2,2 L6.4,1.2 L7,5.8 L3,7.4 Z" fill="#8c8490"/><path d="M2.4,2.6 L5.8,2.2 L6,4.6 L3.2,5.6 Z" fill="#c8aab0"/><path d="M5.4,0.8 L7.4,3.4" stroke="#555" stroke-width="0.8"/></svg><svg class="abs" style="left:14.0px;top:52.5px" width="8.4" height="8.4" viewBox="0 0 8.4 8.4"><path d="M2.4,1.2 L7.4,0.8 L6,6.8 L1,7.2 Z" fill="#8cc2f2"/><path d="M3.2,2.2 L6.2,2 L5.4,5.8 L2.2,6 Z" fill="#c4e0f8"/></svg><svg class="abs" style="left:3.3px;top:63.5px" width="8.4" height="8.4" viewBox="0 0 8.4 8.4"><rect x="1" y="1.6" width="6" height="5.6" rx="0.8" fill="#86b4e4"/><rect x="2.4" y="3" width="3" height="2.8" fill="#eef4fc"/><rect x="4.6" y="0.8" width="2" height="1.6" fill="#5f8fc8"/></svg><svg class="abs" style="left:14.0px;top:63.5px" width="8.4" height="8.4" viewBox="0 0 8.4 8.4"><path d="M1,2 L7.4,2 L6.4,7 L2,7 Z" fill="#6f8a78"/><path d="M1.8,3 L6.6,3 L6.2,4.6 L2.2,4.6 Z" fill="#d0d8d0"/><rect x="5.4" y="0.8" width="2" height="1.4" fill="#3a3a3a"/></svg><svg class="abs" style="left:3.3px;top:73.8px" width="8.4" height="8.4" viewBox="0 0 8.4 8.4"><circle cx="4" cy="2.8" r="2" fill="#5a92cc"/><circle cx="4" cy="2.8" r="0.9" fill="#d8e8f8"/><rect x="3.4" y="4.4" width="1.2" height="2" fill="#5a92cc"/><rect x="1.8" y="6.2" width="4.6" height="1.2" fill="#6f9ccc"/></svg><svg class="abs" style="left:14.0px;top:73.8px" width="8.4" height="8.4" viewBox="0 0 8.4 8.4"><path d="M1.4,7.4 L1.4,2.6 L7,2.6 L7,7.4" stroke="#98a070" stroke-width="0.9" fill="none"/><rect x="5.8" y="0.8" width="1.8" height="1" fill="#333"/><path d="M1.4,2.6 L2.6,1.6 L7.6,1.6" stroke="#b0b890" stroke-width="0.6" fill="none"/></svg><svg class="abs" style="left:3.3px;top:85.0px" width="8.4" height="8.4" viewBox="0 0 8.4 8.4"><rect x="1.6" y="1.2" width="4.6" height="1.4" fill="#6f9a78"/><rect x="2.2" y="2.6" width="3.4" height="4" fill="#8ab0b8"/><rect x="1.4" y="6.4" width="5.2" height="1.2" fill="#6c8a9a"/></svg><svg class="abs" style="left:14.0px;top:85.0px" width="8.4" height="8.4" viewBox="0 0 8.4 8.4"><path d="M1.4,5.4 Q4,1.6 6.8,5.4 Z" fill="#d4c4cc"/><path d="M2,5.8 L6.4,5.8" stroke="#a8a0b0" stroke-width="0.8"/><rect x="5.2" y="0.8" width="1.8" height="0.9" fill="#444"/><path d="M3,3 L4.8,1.8" stroke="#c08890" stroke-width="0.7"/></svg><svg class="abs" style="left:3.3px;top:96.5px" width="8.4" height="8.4" viewBox="0 0 8.4 8.4"><path d="M1,2.2 L2.6,1 L4,2.4 L5.6,1 L7,2.2 L7,7.4 L1,7.4 Z" fill="#e2862a"/><rect x="2" y="3.4" width="1.4" height="3" fill="#8a4a18"/><rect x="4.6" y="3" width="1.6" height="3.6" fill="#f4c070"/><rect x="3.4" y="0.8" width="1" height="2.4" fill="#4a4a4a"/></svg><svg class="abs" style="left:14.0px;top:96.5px" width="8.4" height="8.4" viewBox="0 0 8.4 8.4"><path d="M1,4.6 Q1.4,1.4 4.6,1.4 Q7.6,1.8 7.4,5 L5.6,5 Q5.4,3.2 4.2,3.2 Q3,3.4 3,4.6 Z" fill="#dcd83e"/><rect x="1.2" y="5" width="6" height="2.4" rx="0.6" fill="#f4f6f0"/><path d="M2,2.2 Q3.2,0.8 5,1.2" stroke="#5aa850" stroke-width="1" fill="none"/></svg></div>
  <svg class="abs" style="left:715px;top:325px" width="85" height="40" viewBox="715 325 85 40">
<rect x="727" y="329.6" width="68" height="30" rx="4" fill="#3f8fd8"/>
<rect x="721.4" y="331.6" width="74" height="26.6" rx="4.5" fill="#fdfdfe"/>
<!-- doraemon body -->
<path d="M768,331.4 Q776,331.6 780,336 Q788,344 795.4,353.4 Q797.4,357 793,358.2 L766,358.2 Z" fill="#1d8fe0"/>
<ellipse cx="795" cy="355.6" rx="3.6" ry="2.8" fill="#fff"/>
<circle cx="789" cy="341.8" r="2.1" fill="#d8202c"/>
<!-- head -->
<ellipse cx="765.6" cy="344" rx="12" ry="12.9" fill="#1e90e2"/>
<ellipse cx="763.2" cy="344.8" rx="10.3" ry="12" fill="#fff"/>
<ellipse cx="765.2" cy="337.4" rx="2.4" ry="2.8" fill="#fff" stroke="#555" stroke-width="0.4"/>
<ellipse cx="769.2" cy="337" rx="2" ry="2.6" fill="#fff" stroke="#555" stroke-width="0.4"/>
<circle cx="764.8" cy="337.6" r="1.5" fill="#c81e2a"/>
<circle cx="768.6" cy="337.4" r="0.9" fill="#222"/>
<path d="M755,340 L760.6,342 M754.4,344 L760.4,344 M755,348.2 L760.6,346.2" stroke="#e09090" stroke-width="0.4"/>
<path d="M761,345.4 Q768,352.6 773.4,345" stroke="#c33" stroke-width="0.5" fill="#fff"/>
<path d="M754,352.4 Q763,359 774,354.4 L774,358.2 L757,358.2 Z" fill="#1d8fe0"/>
<circle cx="763.3" cy="357" r="1.6" fill="#f0c020"/>
<ellipse cx="770.4" cy="355" rx="2.9" ry="2.6" fill="#fff"/>
<!-- icons -->
<g fill="#111">
<path d="M726.6,337.6 h7.2 v4.6 h-7.2 z M727.8,338.8 v2.2 h4.8 v-2.2 z" fill-rule="evenodd"/>
<rect x="729.6" y="335.6" width="1.3" height="9.6"/>
<path d="M744.4,336.6 A3.6,3.6 0 1 0 746.4,343.2 A3.9,3.9 0 0 1 744.4,336.6 Z"/>
<path d="M738.6,349.2 L741,348.4 Q742.2,349.6 743.4,348.4 L745.8,349.2 L745.2,351.2 L744.2,351 L744.2,354.6 L740.2,354.6 L740.2,351 L739.2,351.2 Z"/>
</g>
<circle cx="727.2" cy="349" r="0.6" fill="#e0a070"/><circle cx="731.6" cy="353.6" r="0.8" fill="#c08040"/>
</svg>
  <div id="status1" class="abs"><div class="abs" style="left:558.8px;top:0.6px;width:56px;height:7.8px;background:#fff"></div><svg class="abs" style="left:607px;top:1px" width="8" height="7" viewBox="0 0 8 7"><circle cx="4.6" cy="2.8" r="1.7" fill="none" stroke="#667" stroke-width="0.6"/><line x1="3.4" y1="4" x2="1.6" y2="6" stroke="#667" stroke-width="0.7"/></svg><div class="abs" style="left:657.5px;top:1px;width:0.6px;height:7px;background:#c0c6d4"></div><div class="abs" style="left:665px;top:1px;width:0.6px;height:7px;background:#c0c6d4"></div><div class="abs" style="left:690px;top:1px;width:0.6px;height:7px;background:#c0c6d4"></div><div class="abs" style="left:718.8px;top:1px;width:0.6px;height:7px;background:#c0c6d4"></div><div class="abs" style="left:726px;top:1px;width:0.6px;height:7px;background:#c0c6d4"></div><div class="abs" style="left:734.5px;top:2.5px;width:13px;height:4.5px;background:#4a699b"></div><div class="abs" style="left:752px;top:2.5px;width:13.5px;height:4.5px;background:#4a699b"></div><div class="abs" style="left:770px;top:2.5px;width:13px;height:4.5px;background:#4a699b"></div><div class="abs" style="left:789px;top:1.2px;width:6px;height:6px;border-radius:50%;background:#1f3f4e"></div><div class="abs" style="left:791.4px;top:2px;width:2.4px;height:2px;border-radius:50%;background:#4f90a8"></div><svg class="abs" role="img" aria-label="绝对 XY 上视图 | 绝对视图 | LAYER0" style="left:0;top:0;font-family:'Liberation Sans','Noto Sans CJK SC',sans-serif" width="800" height="8.7" viewBox="0 0 800 8.7"><text x="619.5" y="6.3" font-size="5.2" textLength="10.4" lengthAdjust="spacingAndGlyphs" fill="#222">绝对</text><text x="631.6" y="6.3" font-size="5.2" textLength="6.6" lengthAdjust="spacingAndGlyphs" fill="#222">XY</text><text x="639.8" y="6.3" font-size="4.7" textLength="14.1" lengthAdjust="spacingAndGlyphs" fill="#222">上视图</text><text x="668" y="6.3" font-size="4.6" textLength="18.4" lengthAdjust="spacingAndGlyphs" fill="#222">绝对视图</text><text x="695" y="6.3" font-size="5" textLength="18.8" lengthAdjust="spacingAndGlyphs" fill="#111" font-weight="bold">LAYER0</text></svg></div>
  <div id="status2" class="abs"><div class="abs" style="left:471.5px;top:0.4px;width:18.5px;height:6.8px;background:#eef0f6;border:0.5px solid #c2c7d6"></div><svg class="abs" style="left:492.1px;top:0.3px" width="7.4" height="7" viewBox="0 0 7.4 7"><rect x="0.8" y="0.6" width="5.8" height="5.8" fill="#f4d8e0" stroke="#d04868" stroke-width="0.9"/><rect x="2.6" y="2" width="2.4" height="3" fill="#e07890"/></svg><svg class="abs" style="left:504.9px;top:0.3px" width="7.4" height="7" viewBox="0 0 7.4 7"><rect x="0.8" y="0.8" width="5.6" height="5.4" fill="#f6e6b0"/><path d="M1,1 L4.4,1 L6.2,3.6 L4,6 L1,5 Z" fill="#e8a030"/><circle cx="4.6" cy="4.6" r="1.3" fill="#d8d040"/></svg><svg class="abs" style="left:518.0px;top:0.3px" width="7.4" height="7" viewBox="0 0 7.4 7"><rect x="1.4" y="2.6" width="4.6" height="3.6" fill="#8a90a4"/><path d="M2.4,2.6 Q3.7,0.2 5,2.6" stroke="#6a7088" stroke-width="0.8" fill="none"/><rect x="2.6" y="3.6" width="2.2" height="1.2" fill="#e8ecf4"/></svg><svg class="abs" style="left:530.8px;top:0.3px" width="7.4" height="7" viewBox="0 0 7.4 7"><circle cx="3.7" cy="1.8" r="1.3" fill="#3f74c4"/><path d="M3.7,3 L3.7,6.4 M2,6.4 L5.4,6.4 M2.4,4 L5,4" stroke="#3f74c4" stroke-width="0.9"/></svg><svg class="abs" style="left:543.9px;top:0.3px" width="7.4" height="7" viewBox="0 0 7.4 7"><path d="M0.8,4.6 L1.8,2.4 L5,2.4 L6.6,4.6 L6.6,5.8 L0.8,5.8 Z" fill="#c43434"/><rect x="2.4" y="1" width="2.6" height="1.6" fill="#4a68b0"/><circle cx="2.2" cy="5.8" r="0.8" fill="#333"/><circle cx="5.2" cy="5.8" r="0.8" fill="#333"/></svg><svg class="abs" style="left:556.7px;top:0.3px" width="7.4" height="7" viewBox="0 0 7.4 7"><rect x="0.8" y="1.2" width="5.8" height="2.8" fill="#c83a78"/><rect x="3.3" y="1" width="0.9" height="5.4" fill="#7a2a50"/><rect x="2" y="4" width="3.4" height="1" fill="#e8a8c4"/></svg><svg class="abs" style="left:570.2px;top:0.3px" width="7.4" height="7" viewBox="0 0 7.4 7"><rect x="2.2" y="0.6" width="3" height="5.8" fill="#d4cc6c" stroke="#8c8c7c" stroke-width="0.5"/><rect x="2.8" y="2.4" width="1.8" height="1.4" fill="#f4f4e0"/></svg><svg class="abs" style="left:582.6px;top:0.3px" width="7.4" height="7" viewBox="0 0 7.4 7"><circle cx="3.7" cy="3.5" r="2.8" fill="#f0f6f0" stroke="#237a34" stroke-width="1"/><path d="M3.7,1.8 L3.7,3.6 L5,4.4" stroke="#1c3c20" stroke-width="0.7" fill="none"/></svg><svg class="abs" style="left:595.6px;top:0.3px" width="7.4" height="7" viewBox="0 0 7.4 7"><rect x="0.8" y="0.6" width="5.8" height="5.8" fill="#eceef4" stroke="#4a4e58" stroke-width="0.5"/><path d="M3.7,0.6 V6.4 M0.8,3.5 H6.6" stroke="#30343c" stroke-width="0.8"/></svg><div class="abs" style="left:491.5px;top:0.6px;width:0.6px;height:6.4px;background:#c0c6d4"></div><div class="abs" style="left:605.5px;top:0.6px;width:0.6px;height:6.4px;background:#c0c6d4"></div><div class="abs" style="left:656px;top:0.6px;width:0.6px;height:6.4px;background:#c0c6d4"></div><div class="abs" style="left:688.5px;top:0.6px;width:0.6px;height:6.4px;background:#c0c6d4"></div><svg class="abs" role="img" aria-label="按单 LS: 1.00 PS: 1.00 单位: 毫米 X =-7788.111 Y = 2970.319 Z = 0000.000" style="left:0;top:0;font-family:'Liberation Sans','Noto Sans CJK SC',sans-serif" width="800" height="7.8" viewBox="0 0 800 7.8"><text x="475.4" y="5.9" font-size="5" textLength="10" lengthAdjust="spacingAndGlyphs" fill="#222">按单</text><text x="609.5" y="5.9" font-size="5" textLength="38" lengthAdjust="spacingAndGlyphs" fill="#222">LS: 1.00 PS: 1.00</text><text x="662.5" y="5.9" font-size="5.2" textLength="10.4" lengthAdjust="spacingAndGlyphs" fill="#222">单位</text><text x="673.5" y="5.9" font-size="5" textLength="1" lengthAdjust="spacingAndGlyphs" fill="#222">:</text><text x="675.6" y="5.9" font-size="4.8" textLength="9.6" lengthAdjust="spacingAndGlyphs" fill="#222">毫米</text><text x="693" y="5.9" font-size="5.2" textLength="7.4" lengthAdjust="spacingAndGlyphs" fill="#c84a5a">X =</text><text x="700.8" y="5.9" font-size="5.2" textLength="23.4" lengthAdjust="spacingAndGlyphs" fill="#e0506a">-7788.111</text><text x="727" y="5.9" font-size="5.2" textLength="65" lengthAdjust="spacingAndGlyphs" fill="#222">Y = 2970.319 Z = 0000.000</text></svg></div>
  <div id="taskbar" class="abs"><div class="abs" style="left:82px;top:0;width:20px;height:4px;background:#e07a28"></div><div class="abs" style="left:164px;top:0;width:19px;height:4px;background:#5a524c"></div><div class="abs" style="left:760px;top:0.6px;width:12px;height:1.6px;background:#d8d4d0;opacity:.8"></div></div>
</div>
</div>
</body>
</html>
